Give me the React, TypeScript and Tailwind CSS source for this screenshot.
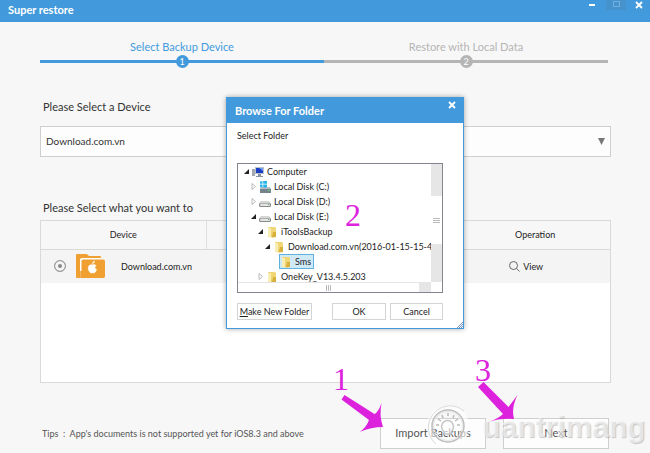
import { ReactNode } from 'react';

interface TreeNode {
  label: string;
  icon: 'computer' | 'system' | 'disk' | 'folder';
  open?: boolean;
  indent: string;
  selected?: boolean;
}

const NODES: TreeNode[] = [
  { label: 'Computer', icon: 'computer', open: true, indent: 'pl-[6px]' },
  { label: 'Local Disk (C:)', icon: 'system', open: false, indent: 'pl-[13px]' },
  { label: 'Local Disk (D:)', icon: 'disk', open: false, indent: 'pl-[13px]' },
  { label: 'Local Disk (E:)', icon: 'disk', open: true, indent: 'pl-[13px]' },
  { label: 'iToolsBackup', icon: 'folder', open: true, indent: 'pl-[20px]' },
  { label: 'Download.com.vn(2016-01-15-15-42-0', icon: 'folder', open: true, indent: 'pl-[27px]' },
  { label: 'Sms', icon: 'folder', indent: 'pl-[34px]', selected: true },
  { label: 'OneKey_V13.4.5.203', icon: 'folder', open: false, indent: 'pl-[20px]' },
];

const NodeIcon = ({ type }: { type: TreeNode['icon'] }) => {
  switch (type) {
    case 'computer':
      return (
        <svg width="12" height="12" viewBox="0 0 12 12" className="shrink-0">
          <rect x="0" y="3" width="3" height="7" fill="#a3a9b0" />
          <rect x="3" y="1" width="9" height="7" fill="#b9c2cc" />
          <rect x="4" y="2" width="7" height="5" fill="#1b3fc4" />
          <path d="M7 2h4v3z" fill="#6f9bf0" />
          <path d="M6 8h3v2H6zM4 10h7v1H4z" fill="#8b949e" />
        </svg>
      );
    case 'system':
      return (
        <svg width="12" height="12" viewBox="0 0 12 12" className="shrink-0">
          <path d="M2 6h8l2 2v4H1V8z" fill="#77838c" />
          <path d="M2 6h8l2 2H1z" fill="#b5bec4" />
          <path d="M1 .5l2.500-.3v2.600H1zM4.200 0H8v2.800H4.200zM1 3.500h2.500v2.800L1 6zM4.200 3.500H8v3H4.200z" fill="#26b3ea" />
          <rect x="9" y="9" width="2" height="1" fill="#4fd36a" />
        </svg>
      );
    case 'disk':
      return (
        <svg width="12" height="12" viewBox="0 0 12 12" className="shrink-0">
          <path d="M2.500 5h7L12 7.500V10l-1 1H1l-1-1V7.500z" fill="#8a8a8a" />
          <path d="M2.500 5h7L12 7.500H0z" fill="#d6d6d6" />
          <rect x="1" y="8" width="10" height="2" rx="1" fill="#e4e4e4" />
          <rect x="9" y="8" width="1" height="1" fill="#5bbd62" />
        </svg>
      );
    default:
      return (
        <svg width="12" height="12" viewBox="0 0 12 12" className="shrink-0">
          <path d="M2 1h4v10H2z" fill="#e5c451" />
          <path d="M4 1h5l1 1v9l-4 1z" fill="#f0d675" />
          <path d="M2 1l3 1.500V12l-3-1.500z" fill="#f9eeb4" />
          <path d="M7 6h3v5H6z" fill="#d9b03c" />
        </svg>
      );
  }
};

const Expander = ({ open }: { open?: boolean }) => (
  <svg width="6" height="7" viewBox="0 0 6 7" className="shrink-0">
    {open === true && <path d="M5 1v5H0z" fill="#222" />}
    {open === false && <path d="M1 .5v6L4.500 3.500z" fill="#fff" stroke="#a8a8a8" strokeWidth="0.8" />}
  </svg>
);

const CloseIcon = () => (
  <svg width="8" height="8" viewBox="0 0 8 8">
    <path d="M1 1l6 6M7 1L1 7" stroke="#fff" strokeWidth="1.800" />
  </svg>
);

const BackupIcon = () => (
  <svg width="29" height="26" viewBox="0 0 29 26" className="shrink-0">
    <path d="M0 2Q0 1 1 1h9q1 0 2 1l1 1h11q1 0 1 1v2H4.500v19H1q-1 0-1-1z" fill="#f0a030" />
    <path d="M4 7q0-2 2-2h19v1.500H5.500V18H4z" fill="#fff" />
    <path d="M5.500 8q0-1.500 1.500-1.500h20q2 0 2 1.500v15q0 2-1 2H4.500V18h1z" fill="#f0a030" />
    <path
      d="M16.500 10.500q.2-2 2-2.500q0 2-2 2.500zM16 12q2-1.200 4 .4q-2.500 2 .5 4.300q-1 3-2.500 3.300q-1-.6-2.200 0q-1.300.4-2.500-1.500q-2-3.200-.4-5.600q1.400-1.800 3.100-.9z"
      fill="#fff"
      stroke="#fff"
      strokeWidth="0.6"
    />
  </svg>
);

const DialogButton = ({ className, children }: { className: string; children: ReactNode }) => (
  <button type="button" className={`h-[17px] whitespace-nowrap border border-[#d4d4d4] bg-white text-[9px] leading-[14px] text-[#222] ${className}`}>
    {children}
  </button>
);

const Step = ({ label, number, active }: { label: string; number: number; active?: boolean }) => (
  <li className={`flex flex-1 flex-col items-center ${active ? 'text-[#429adc]' : 'text-[#b5b5b5]'}`}>
    <span className="text-[11px] leading-4">{label}</span>
    <div className="grid w-full grid-cols-1 place-items-center">
      <div className={`col-start-1 row-start-1 h-[3px] w-full ${active ? 'bg-[#429adc]' : 'bg-[#b5b5b5]'}`} />
      <span
        className={`col-start-1 row-start-1 h-[13px] w-[13px] rounded-full text-center text-[9px] leading-[13px] text-white ${
          active ? 'bg-[#429adc]' : 'bg-[#b5b5b5]'
        }`}
      >
        {number}
      </span>
    </div>
  </li>
);

const FolderDialog = () => (
  <section
    role="dialog"
    aria-label="Browse For Folder"
    className="absolute left-[226px] top-[97px] w-[238px] border border-[#429adc] bg-white shadow-[0_0_5px_rgba(0,0,0,0.35)]"
  >
    <header className="flex h-[25px] items-start justify-between bg-[#429adc] pl-2 pr-[7px] text-white">
      <h2 className="text-[11px] font-bold leading-[26px]">Browse For Folder</h2>
      <button type="button" aria-label="Close" className="pt-[3px]">
        <CloseIcon />
      </button>
    </header>
    <div className="px-[10px] pb-2 pt-[7px]">
      <p className="text-[9px] leading-[12px] text-[#222]">Select Folder</p>
      <div className="mt-[21px] grid w-[206px] grid-cols-[1fr_11px] grid-rows-[118px_10px] border border-[#82868c]">
        <ul className="overflow-hidden text-[9px] leading-[14px] text-[#1c1c1c]">
          {NODES.map((node) => (
            <li key={node.label} className={`flex h-[15px] items-center gap-px whitespace-nowrap ${node.indent}`}>
              <Expander open={node.open} />
              <span
                className={`flex h-[15px] items-center gap-[3px] border pr-[2px] ${
                  node.selected ? 'border-[#5fb2dc] bg-[#cfe9f7]' : 'border-transparent'
                }`}
              >
                <NodeIcon type={node.icon} />
                {node.label}
              </span>
            </li>
          ))}
        </ul>
        <div className="flex flex-col bg-[#e6e6e6] pb-[38px] pt-[32px]">
          <div className="flex flex-1 flex-col items-center justify-end gap-px bg-white pb-[21px]">
            <i className="h-px w-[7px] bg-[#bbb]" />
            <i className="h-px w-[7px] bg-[#bbb]" />
            <i className="h-px w-[7px] bg-[#bbb]" />
          </div>
        </div>
        <div className="flex bg-[#e6e6e6] pr-[12px]">
          <div className="flex flex-1 items-center justify-center gap-px border-t border-[#e6e6e6] bg-white">
            <i className="h-[6px] w-px bg-[#bbb]" />
            <i className="h-[6px] w-px bg-[#bbb]" />
            <i className="h-[6px] w-px bg-[#bbb]" />
          </div>
        </div>
      </div>
      <div className="mt-[10px] flex w-[206px]">
        <DialogButton className="w-[75px]">
          <u>M</u>ake New Folder
        </DialogButton>
        <DialogButton className="ml-auto w-[54px]">OK</DialogButton>
        <DialogButton className="ml-1 w-[53px]">Cancel</DialogButton>
      </div>
    </div>
    <svg width="7" height="7" viewBox="0 0 7 7" className="absolute bottom-0 right-0">
      <path d="M1 7l6-6M3 7l4-4M5 7l2-2" stroke="#7a93b8" />
    </svg>
  </section>
);

const Annotations = () => (
  <div className="pointer-events-none absolute inset-0 overflow-hidden font-['Liberation_Serif',serif] text-[32px] leading-8 text-[#dd22dd]">
    <span className="absolute left-[333px] top-[363px]">1</span>
    <span className="absolute left-[345px] top-[199px]">2</span>
    <span className="absolute left-[475px] top-[354px]">3</span>
    <svg width="200" height="80" viewBox="340 380 200 80" className="absolute left-[340px] top-[380px]" fill="#dd22dd">
      <path d="M344.500 395l-3 4.500L369 420Q366 428 359.500 432q12-5 23.500-5q-4-11-1.500-24q-3 9-7 11z" />
      <path d="M483.500 382l-5.500 5L503 414Q499 418 489 422q11-4 25-3q-3-11 3.500-24q-6 8-9 12z" />
    </svg>
  </div>
);

const Watermark = () => (
  <div className="pointer-events-none absolute left-[426px] top-[400px] flex items-end" aria-hidden="true">
    <svg width="56" height="50" viewBox="0 0 56 50" fill="none">
      <circle cx="22" cy="26" r="18" stroke="#fff" strokeOpacity="0.6" strokeWidth="6" />
      <path d="M10 44A21.500 21.500 0 1 1 38 11" stroke="#dadada" />
      <circle cx="22" cy="26" r="16" stroke="#bdbdbd" strokeWidth="1.500" />
      <circle cx="22" cy="26" r="14.500" stroke="#e6e6e6" />
      <path d="M18 34q0-3-2-5a6 6 0 1 1 11 0q-2 2-2 5z" fill="#fff" fillOpacity="0.6" stroke="#c6c6c6" strokeWidth="1.500" />
      <path d="M22 13v3M16 15l1 3M28 15l-1 3M12 19l3 2M32 19l-3 2M10 25h3M34 25h-3" stroke="#bbb" strokeWidth="1.500" />
    </svg>
    <span className="font-['Liberation_Sans',sans-serif] text-[30px] font-bold leading-[46px] text-[#fafafa]/60 [text-shadow:1px_1px_1px_rgba(150,150,150,0.5)]">
      uantrimang
    </span>
  </div>
);

const App = () => {
  return (
    <div className="relative flex min-h-screen flex-col overflow-hidden bg-[#f7f7f7] font-['Lato','Noto_Sans',sans-serif] text-[#333]">
      <header className="flex h-[22px] items-start justify-between bg-[#429adc] pl-2 pr-[7px] text-white">
        <h1 className="text-[11px] font-bold leading-5">Super restore</h1>
        <div className="flex">
          <button type="button" aria-label="Minimize" className="flex h-[10px] w-[17px] items-start pt-1">
            <i className="h-[2px] w-[6px] bg-white" />
          </button>
          <button type="button" aria-label="Maximize" className="mr-[9px] flex h-[10px] w-[20px] justify-center bg-[#4592cd]">
            <i className="mt-px h-[6px] w-[7px] border border-[#72aede]" />
          </button>
          <button type="button" aria-label="Close">
            <CloseIcon />
          </button>
        </div>
      </header>

      <main className="flex flex-1 flex-col pb-1 pl-10 pr-[39px]">
        {/* Steps */}
        <ol className="flex pr-[3px] pt-[17px]">
          <Step label="Select Backup Device" number={1} active />
          <Step label="Restore with Local Data" number={2} />
        </ol>

        {/* Device picker */}
        <label htmlFor="device" className="mt-[31px] pl-[3px] text-[11px] leading-4">
          Please Select a Device
        </label>
        <div className="mt-[11px] grid grid-cols-1 items-center">
          <select
            id="device"
            className="col-start-1 row-start-1 h-[31px] w-full appearance-none border border-[#cfcfcf] bg-[#fdfdfd] pl-[5px] text-[10px] text-[#333]"
          >
            <option>Download.com.vn</option>
          </select>
          <svg width="7" height="7" viewBox="0 0 7 7" className="pointer-events-none col-start-1 row-start-1 mr-[6px] justify-self-end">
            <path d="M0 0h7L3.500 7z" fill="#777" />
          </svg>
        </div>

        {/* Backups */}
        <h2 className="mt-[43px] pl-[3px] text-[11px] leading-4">Please Select what you want to</h2>
        <div className="mt-1 min-h-[163px] border border-[#d9d9d9] bg-white">
          <table className="w-full table-fixed text-[9px] text-[#222]">
            <thead className="bg-[#f7f7f7]">
              <tr className="h-[28px] border-b border-[#d9d9d9]">
                <th className="w-[29%] border-r border-[#e0e0e0] font-normal">Device</th>
                <th className="w-[44%]" />
                <th className="w-[27%] pl-1 font-normal">Operation</th>
              </tr>
            </thead>
            <tbody>
              <tr className="h-[34px] bg-[#f4f4f4]">
                <td>
                  <label className="flex items-center pl-[13px]">
                    <input
                      type="radio"
                      name="backup"
                      defaultChecked
                      className="h-3 w-3 appearance-none rounded-full border border-[#999] bg-[#888] shadow-[inset_0_0_0_3px_#f4f4f4]"
                    />
                    <span className="ml-[10px] mr-[16px]">
                      <BackupIcon />
                    </span>
                    Download.com.vn
                  </label>
                </td>
                <td />
                <td>
                  <button type="button" className="flex w-full items-center justify-center gap-[3px] pr-[14px]">
                    <svg width="11" height="11" viewBox="0 0 11 11" fill="none" stroke="#666">
                      <circle cx="4.500" cy="4.500" r="4" />
                      <path d="M7.500 7.500l3 3" />
                    </svg>
                    View
                  </button>
                </td>
              </tr>
            </tbody>
          </table>
        </div>

        {/* Footer */}
        <footer className="mt-auto flex items-center gap-[17px] pr-[2px] pt-[34px]">
          <p className="mr-auto pl-[2px] text-[9px] text-[#555]">
            Tips&nbsp; :&nbsp; App's documents is not supported yet for iOS8.3 and above
          </p>
          <button type="button" className="h-[31px] w-[106px] border border-[#cfcfcf] bg-[#fdfdfd] text-[11px] text-[#555]">
            Import Backups
          </button>
          <button type="button" className="h-[31px] w-[106px] border border-[#cfcfcf] bg-[#fdfdfd] text-[11px] text-[#555]">
            Next
          </button>
        </footer>
      </main>

      <FolderDialog />
      <Watermark />
      <Annotations />
    </div>
  );
};

export default App;
